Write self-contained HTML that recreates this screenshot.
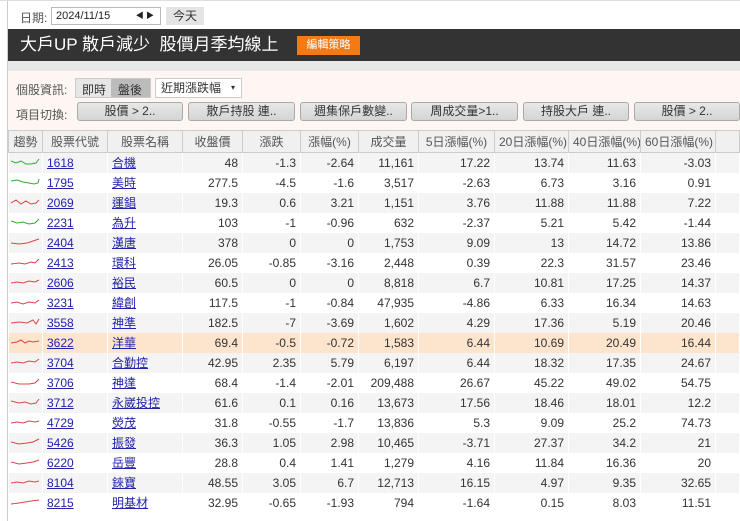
<!DOCTYPE html><html><head><meta charset="utf-8"><style>
*{margin:0;padding:0;box-sizing:border-box}
body{width:740px;height:521px;overflow:hidden;background:#fff;font-family:"Liberation Sans","Noto Sans CJK TC",sans-serif;font-size:12px;color:#333;position:relative}
.a{position:absolute}
.btn{position:absolute;top:102px;height:19px;border:1px solid #aaa;border-radius:3px;background:linear-gradient(#e8e8e8,#d4d4d4);text-align:center;line-height:17px;font-size:12px;color:#333}
table{position:absolute;left:8px;top:130px;border-collapse:collapse;table-layout:fixed;width:732px}
td,th{height:20px;font-size:12px;white-space:nowrap;overflow:hidden;padding:0 4px}
th{font-weight:normal;color:#555;background:#f0f0f0;border:1px solid #ccc;height:22px;text-align:center}
td{text-align:right;color:#333;border-right:1px solid #fff}
tr:nth-child(odd) td{background:#f4f4f4}
tr.h td{background:#fde4cc}
td.c,td.n{text-align:left}
td a{color:#2222aa;text-decoration:underline}
td.s{padding:0 2px;text-align:left}
</style></head><body>
<div class="a" style="left:7px;top:0;width:1px;height:521px;background:#ccc"></div>
<div class="a" style="left:0;top:0;width:740px;height:1px;background:#ddd"></div>
<div class="a" style="left:20px;top:9px;color:#555">日期:</div>
<div class="a" style="left:51px;top:7px;width:110px;height:18px;border:1px solid #bbb;font-size:11px;line-height:16px;padding-left:4px;color:#222">2024/11/15<span style="position:absolute;right:6px;font-size:8px">◀ ▶</span></div>
<div class="a" style="left:166px;top:7px;width:38px;height:18px;background:#e4e4e4;text-align:center;line-height:18px">今天</div>
<div class="a" style="left:8px;top:29px;width:732px;height:32px;background:#333"></div>
<div class="a" style="left:20px;top:34px;color:#fff;font-size:17px;line-height:22px">大戶UP 散戶減少&nbsp; 股價月季均線上</div>
<div class="a" style="left:297px;top:36px;width:63px;height:19px;background:#f57a14;color:#fff;font-size:11px;text-align:center;line-height:19px">編輯策略</div>
<div class="a" style="left:8px;top:61px;width:732px;height:10px;background:#e8e8e8"></div>
<div class="a" style="left:8px;top:71px;width:732px;height:59px;background:#fdf6f2"></div>
<div class="a" style="left:16px;top:81px;color:#555">個股資訊:</div>
<div class="a" style="left:75px;top:78px;width:76px;height:20px;background:#e6e6e6;border:1px solid #ccc"></div>
<div class="a" style="left:111px;top:79px;width:39px;height:18px;background:#bbb"></div>
<div class="a" style="left:82px;top:81px">即時</div>
<div class="a" style="left:118px;top:81px">盤後</div>
<div class="a" style="left:155px;top:78px;width:87px;height:20px;border:1px solid #ccc;background:#fff;padding-left:5px;line-height:18px">近期漲跌幅 <span style="position:absolute;right:6px;font-size:8px">▾</span></div>
<div class="a" style="left:16px;top:106px;color:#555">項目切換:</div>
<div class="btn" style="left:77px;width:106px">股價 &gt; 2..</div>
<div class="btn" style="left:188px;width:107px">散戶持股 連..</div>
<div class="btn" style="left:300px;width:107px">週集保戶數變..</div>
<div class="btn" style="left:411px;width:107px">周成交量&gt;1..</div>
<div class="btn" style="left:523px;width:106px">持股大戶 連..</div>
<div class="btn" style="left:634px;width:106px">股價 &gt; 2..</div>
<table>
<colgroup><col style="width:34px"><col style="width:65px"><col style="width:75px"><col style="width:60px"><col style="width:58px"><col style="width:58px"><col style="width:60px"><col style="width:76px"><col style="width:74px"><col style="width:72px"><col style="width:75px"><col></colgroup>
<tr><th>趨勢</th><th>股票代號</th><th>股票名稱</th><th>收盤價</th><th>漲跌</th><th>漲幅(%)</th><th>成交量</th><th>5日漲幅(%)</th><th>20日漲幅(%)</th><th>40日漲幅(%)</th><th>60日漲幅(%)</th><th style="background:#f0f0f0"></th></tr>
<tbody id="b">
<tr><td class="s"><svg width="30" height="10"><polyline points="0,4 5,6 10,4 15,7 20,7 25,6 28,2" fill="none" stroke="#3a3" stroke-width="1"/></svg></td><td class="c"><a>1618</a></td><td class="n"><a>合機</a></td><td>48</td><td>-1.3</td><td>-2.64</td><td>11,161</td><td>17.22</td><td>13.74</td><td>11.63</td><td>-3.03</td><td></td></tr>
<tr><td class="s"><svg width="30" height="10"><polyline points="0,4 6,3 12,5 18,6 23,7 27,6 28,2" fill="none" stroke="#3a3"/></svg></td><td class="c"><a>1795</a></td><td class="n"><a>美時</a></td><td>277.5</td><td>-4.5</td><td>-1.6</td><td>3,517</td><td>-2.63</td><td>6.73</td><td>3.16</td><td>0.91</td><td></td></tr>
<tr><td class="s"><svg width="30" height="10"><polyline points="0,6 5,3 10,7 15,4 20,7 25,6 28,3" fill="none" stroke="#d44"/></svg></td><td class="c"><a>2069</a></td><td class="n"><a>運錩</a></td><td>19.3</td><td>0.6</td><td>3.21</td><td>1,151</td><td>3.76</td><td>11.88</td><td>11.88</td><td>7.22</td><td></td></tr>
<tr><td class="s"><svg width="30" height="10"><polyline points="0,4 6,6 12,5 18,7 24,6 28,2" fill="none" stroke="#3a3"/></svg></td><td class="c"><a>2231</a></td><td class="n"><a>為升</a></td><td>103</td><td>-1</td><td>-0.96</td><td>632</td><td>-2.37</td><td>5.21</td><td>5.42</td><td>-1.44</td><td></td></tr>
<tr><td class="s"><svg width="30" height="10"><polyline points="0,6 8,7 16,6 22,4 28,2" fill="none" stroke="#d44"/></svg></td><td class="c"><a>2404</a></td><td class="n"><a>漢唐</a></td><td>378</td><td>0</td><td>0</td><td>1,753</td><td>9.09</td><td>13</td><td>14.72</td><td>13.86</td><td></td></tr>
<tr><td class="s"><svg width="30" height="10"><polyline points="0,7 8,6 14,7 20,5 24,6 28,2" fill="none" stroke="#d44"/></svg></td><td class="c"><a>2413</a></td><td class="n"><a>環科</a></td><td>26.05</td><td>-0.85</td><td>-3.16</td><td>2,448</td><td>0.39</td><td>22.3</td><td>31.57</td><td>23.46</td><td></td></tr>
<tr><td class="s"><svg width="30" height="10"><polyline points="0,6 6,5 12,6 18,4 24,5 28,3" fill="none" stroke="#d44"/></svg></td><td class="c"><a>2606</a></td><td class="n"><a>裕民</a></td><td>60.5</td><td>0</td><td>0</td><td>8,818</td><td>6.7</td><td>10.81</td><td>17.25</td><td>14.37</td><td></td></tr>
<tr><td class="s"><svg width="30" height="10"><polyline points="0,6 6,5 12,7 18,5 24,6 28,3" fill="none" stroke="#d44"/></svg></td><td class="c"><a>3231</a></td><td class="n"><a>緯創</a></td><td>117.5</td><td>-1</td><td>-0.84</td><td>47,935</td><td>-4.86</td><td>6.33</td><td>16.34</td><td>14.63</td><td></td></tr>
<tr><td class="s"><svg width="30" height="10"><polyline points="0,6 8,5 16,6 22,3 25,7 28,2" fill="none" stroke="#d44"/></svg></td><td class="c"><a>3558</a></td><td class="n"><a>神準</a></td><td>182.5</td><td>-7</td><td>-3.69</td><td>1,602</td><td>4.29</td><td>17.36</td><td>5.19</td><td>20.46</td><td></td></tr>
<tr class="h"><td class="s"><svg width="30" height="10"><polyline points="0,6 6,5 10,3 14,6 18,4 22,5 28,4" fill="none" stroke="#d44"/></svg></td><td class="c"><a>3622</a></td><td class="n"><a>洋華</a></td><td>69.4</td><td>-0.5</td><td>-0.72</td><td>1,583</td><td>6.44</td><td>10.69</td><td>20.49</td><td>16.44</td><td></td></tr>
<tr><td class="s"><svg width="30" height="10"><polyline points="0,6 6,5 12,6 18,4 24,5 28,2" fill="none" stroke="#d44"/></svg></td><td class="c"><a>3704</a></td><td class="n"><a>合勤控</a></td><td>42.95</td><td>2.35</td><td>5.79</td><td>6,197</td><td>6.44</td><td>18.32</td><td>17.35</td><td>24.67</td><td></td></tr>
<tr><td class="s"><svg width="30" height="10"><polyline points="0,5 8,7 18,7 24,6 28,2" fill="none" stroke="#d44"/></svg></td><td class="c"><a>3706</a></td><td class="n"><a>神達</a></td><td>68.4</td><td>-1.4</td><td>-2.01</td><td>209,488</td><td>26.67</td><td>45.22</td><td>49.02</td><td>54.75</td><td></td></tr>
<tr><td class="s"><svg width="30" height="10"><polyline points="0,4 8,6 14,5 20,7 25,6 28,2" fill="none" stroke="#d44"/></svg></td><td class="c"><a>3712</a></td><td class="n"><a>永崴投控</a></td><td>61.6</td><td>0.1</td><td>0.16</td><td>13,673</td><td>17.56</td><td>18.46</td><td>18.01</td><td>12.2</td><td></td></tr>
<tr><td class="s"><svg width="30" height="10"><polyline points="0,6 6,5 12,6 18,4 24,5 28,4" fill="none" stroke="#d44"/></svg></td><td class="c"><a>4729</a></td><td class="n"><a>熒茂</a></td><td>31.8</td><td>-0.55</td><td>-1.7</td><td>13,836</td><td>5.3</td><td>9.09</td><td>25.2</td><td>74.73</td><td></td></tr>
<tr><td class="s"><svg width="30" height="10"><polyline points="0,5 8,7 16,6 22,5 28,2" fill="none" stroke="#d44"/></svg></td><td class="c"><a>5426</a></td><td class="n"><a>振發</a></td><td>36.3</td><td>1.05</td><td>2.98</td><td>10,465</td><td>-3.71</td><td>27.37</td><td>34.2</td><td>21</td><td></td></tr>
<tr><td class="s"><svg width="30" height="10"><polyline points="0,5 8,7 16,6 22,5 28,3" fill="none" stroke="#d44"/></svg></td><td class="c"><a>6220</a></td><td class="n"><a>岳豐</a></td><td>28.8</td><td>0.4</td><td>1.41</td><td>1,279</td><td>4.16</td><td>11.84</td><td>16.36</td><td>20</td><td></td></tr>
<tr><td class="s"><svg width="30" height="10"><polyline points="0,6 6,5 12,6 18,4 24,5 28,4" fill="none" stroke="#d44"/></svg></td><td class="c"><a>8104</a></td><td class="n"><a>錸寶</a></td><td>48.55</td><td>3.05</td><td>6.7</td><td>12,713</td><td>16.15</td><td>4.97</td><td>9.35</td><td>32.65</td><td></td></tr>
<tr><td class="s"><svg width="30" height="10"><polyline points="0,7 8,6 14,5 20,4 28,3" fill="none" stroke="#d44"/></svg></td><td class="c"><a>8215</a></td><td class="n"><a>明基材</a></td><td>32.95</td><td>-0.65</td><td>-1.93</td><td>794</td><td>-1.64</td><td>0.15</td><td>8.03</td><td>11.51</td><td></td></tr>
</tbody></table>
</body></html>
